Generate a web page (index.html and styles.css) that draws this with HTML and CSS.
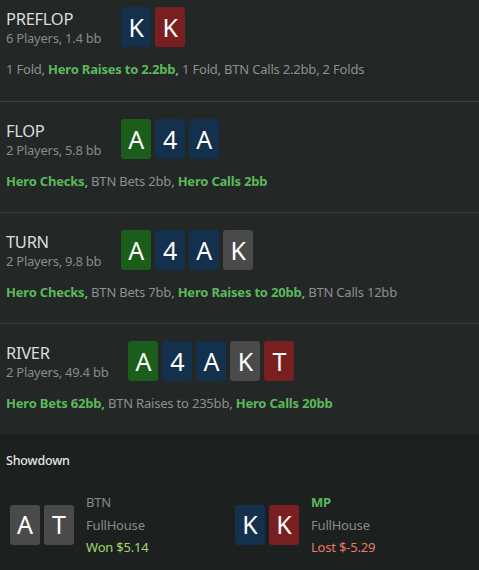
FILE: index.html
```html
<!DOCTYPE html>
<html>
<head>
<meta charset="utf-8">
<link rel="stylesheet" href="styles.css">
</head>
<body>
<div class="page">
  <section class="street first">
    <div class="street-head">
      <div class="info">
        <div class="title">PREFLOP</div>
        <div class="sub">6 Players, 1.4 bb</div>
      </div>
      <div class="cards">
        <span class="card blue">K</span><span class="card red">K</span>
      </div>
    </div>
    <div class="actions">1 Fold, <b class="hero">Hero Raises to 2.2bb,</b> 1 Fold, BTN Calls 2.2bb, 2 Folds</div>
  </section>
  <section class="street">
    <div class="street-head">
      <div class="info">
        <div class="title">FLOP</div>
        <div class="sub">2 Players, 5.8 bb</div>
      </div>
      <div class="cards">
        <span class="card green">A</span><span class="card blue">4</span><span class="card blue">A</span>
      </div>
    </div>
    <div class="actions"><b class="hero">Hero Checks,</b> BTN Bets 2bb, <b class="hero">Hero Calls 2bb</b></div>
  </section>
  <section class="street">
    <div class="street-head">
      <div class="info">
        <div class="title">TURN</div>
        <div class="sub">2 Players, 9.8 bb</div>
      </div>
      <div class="cards">
        <span class="card green">A</span><span class="card blue">4</span><span class="card blue">A</span><span class="card gray">K</span>
      </div>
    </div>
    <div class="actions"><b class="hero">Hero Checks,</b> BTN Bets 7bb, <b class="hero">Hero Raises to 20bb,</b> BTN Calls 12bb</div>
  </section>
  <section class="street last">
    <div class="street-head">
      <div class="info">
        <div class="title">RIVER</div>
        <div class="sub">2 Players, 49.4 bb</div>
      </div>
      <div class="cards">
        <span class="card green">A</span><span class="card blue">4</span><span class="card blue">A</span><span class="card gray">K</span><span class="card red">T</span>
      </div>
    </div>
    <div class="actions"><b class="hero">Hero Bets 62bb,</b> BTN Raises to 235bb, <b class="hero">Hero Calls 20bb</b></div>
  </section>
  <section class="showdown">
    <div class="sd-title">Showdown</div>
    <div class="players">
      <div class="player">
        <div class="cards">
          <span class="card gray">A</span><span class="card gray">T</span>
        </div>
        <div class="pinfo">
          <div class="pos">BTN</div>
          <div class="hand">FullHouse</div>
          <div class="won">Won $5.14</div>
        </div>
      </div>
      <div class="player">
        <div class="cards">
          <span class="card blue">K</span><span class="card red">K</span>
        </div>
        <div class="pinfo">
          <div class="pos hero-pos">MP</div>
          <div class="hand">FullHouse</div>
          <div class="lost">Lost $-5.29</div>
        </div>
      </div>
    </div>
  </section>
</div>
</body>
</html>
```
FILE: styles.css
```css
* { box-sizing: border-box; }
html, body {
  margin: 0;
  padding: 0;
  background: #232726;
  font-family: "Noto Sans", "Open Sans", sans-serif;
  color: #8f8f8f;
  height: 100%;
}
.page {
  display: flex;
  flex-direction: column;
}
.street {
  padding: 17px 6px 0 6px;
  height: 111px;
  border-bottom: 1px solid #3b3f3e;
}
.street.first {
  padding-top: 7px;
  height: 102px;
}
.street.last {
  border-bottom: none;
  height: 110px;
}
.street-head {
  display: flex;
  align-items: flex-start;
  gap: 20px;
}
.info {
  padding-top: 1px;
}
.title {
  font-size: 16.5px;
  line-height: 22px;
  color: #dcdcdc;
  letter-spacing: -0.3px;
}
.sub {
  font-size: 13px;
  line-height: 16px;
  color: #8a8a8a;
  letter-spacing: -0.25px;
}
.cards {
  display: flex;
  gap: 4px;
}
.card {
  width: 30px;
  height: 40px;
  border-radius: 3px;
  display: flex;
  align-items: center;
  justify-content: center;
  color: #ffffff;
  font-size: 25px;
  line-height: 1;
}
.card.blue { background: #13304c; }
.card.red { background: #7a1f1f; }
.card.green { background: #1b5e1b; }
.card.gray { background: #4a4a4a; }
.actions {
  margin-top: 13px;
  font-size: 13px;
  line-height: 18px;
  color: #8f8f8f;
  letter-spacing: -0.2px;
  white-space: nowrap;
}
.hero {
  color: #5cb85c;
  font-weight: 700;
}
.showdown {
  background: #1c201e;
  flex: 1;
  padding: 18px 6px 20px 6px;
  min-height: 137px;
}
.sd-title {
  font-size: 12.5px;
  line-height: 18px;
  color: #e6e6e6;
  font-weight: 500;
  letter-spacing: -0.2px;
}
.players {
  margin-top: 21px;
  display: grid;
  grid-template-columns: 225px 1fr;
  padding-left: 4px;
}
.player {
  display: flex;
  align-items: center;
  gap: 12px;
}
.pinfo {
  font-size: 13px;
  line-height: 22.5px;
  letter-spacing: -0.2px;
}
.pos { color: #8a8a8a; }
.hero-pos { color: #5cb85c; font-weight: 700; }
.hand { color: #8a8a8a; }
.won { color: #9fd86b; }
.lost { color: #ea7a63; }
```
